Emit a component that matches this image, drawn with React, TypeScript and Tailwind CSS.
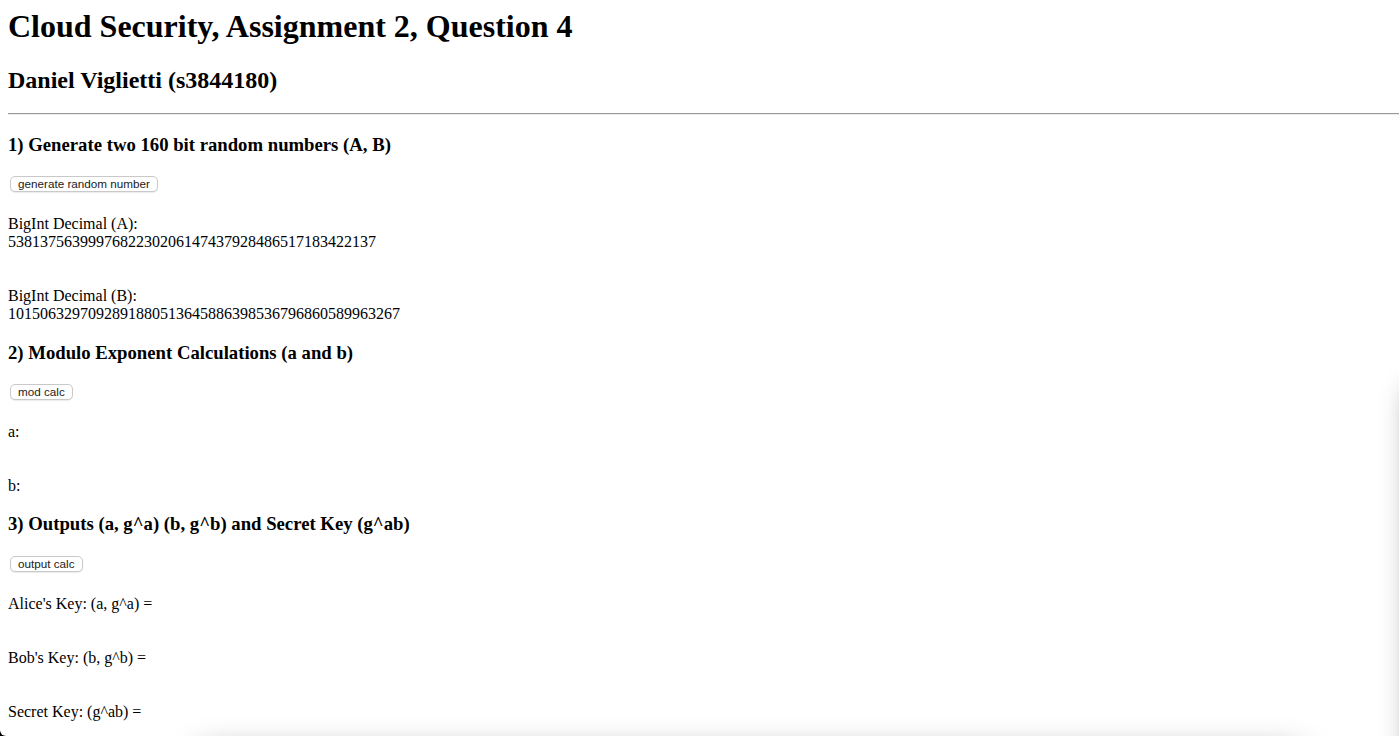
const btn =
  "ml-[2px] block rounded-[5px] border border-[#c9c9c9] bg-white px-[7px] py-0 text-[11.7px] leading-[14px] text-[#222] shadow-[0_1px_1px_rgba(0,0,0,0.08)] font-['Liberation_Sans',Arial,sans-serif]"

export default function App() {
  return (
    <div className="relative h-[736px] overflow-hidden bg-white text-black font-['Liberation_Serif','Times_New_Roman',serif]">
      <div className="flex flex-col items-start pl-2">
        <h1 className="pt-2 text-[32px] font-bold leading-[37px]">
          Cloud Security, Assignment 2, Question 4
        </h1>
        <h2 className="mt-[21px] text-[24px] font-bold leading-[28px]">
          Daniel Viglietti (s3844180)
        </h2>
        <hr className="mt-[19px] h-[2px] w-full border-t border-b-0 border-[#9a9a9a] bg-[#ececec]" />

        {/* Section 1 */}
        <h3 className="mt-[19px] text-[18.72px] font-bold leading-[21px]">
          1) Generate two 160 bit random numbers (A, B)
        </h3>
        <button className={`mt-[21px] ${btn}`}>generate random number</button>
        <p className="mt-[23px] text-[16px] leading-[18px]">
          BigInt Decimal (A):
          <br />
          5381375639997682230206147437928486517183422137
        </p>
        <p className="mt-[36px] text-[16px] leading-[18px]">
          BigInt Decimal (B):
          <br />
          1015063297092891880513645886398536796860589963267
        </p>

        {/* Section 2 */}
        <h3 className="mt-[19px] text-[18.72px] font-bold leading-[21px]">
          2) Modulo Exponent Calculations (a and b)
        </h3>
        <button className={`mt-[21px] ${btn}`}>mod calc</button>
        <p className="mt-[23px] text-[16px] leading-[18px]">a:</p>
        <p className="mt-[36px] text-[16px] leading-[18px]">b:</p>

        {/* Section 3 */}
        <h3 className="mt-[18px] text-[18.72px] font-bold leading-[21px]">
          3) Outputs (a, g^a) (b, g^b) and Secret Key (g^ab)
        </h3>
        <button className={`mt-[22px] ${btn}`}>output calc</button>
        <p className="mt-[23px] text-[16px] leading-[18px]">Alice's Key: (a, g^a) =</p>
        <p className="mt-[36px] text-[16px] leading-[18px]">Bob's Key: (b, g^b) =</p>
        <p className="mt-[36px] text-[16px] leading-[18px]">Secret Key: (g^ab) =</p>
      </div>

      {/* shadows of a neighbouring window */}
      <div className="pointer-events-none absolute left-[1410px] top-[390px] h-[420px] w-[40px] bg-black/45 blur-[14px]" />
      <div className="pointer-events-none absolute left-[200px] top-[752px] h-[40px] w-[1100px] bg-black/40 blur-[16px]" />
      {/* window corner */}
      <div className="absolute bottom-0 left-0 h-[12px] w-[6px] bg-black">
        <div className="h-full w-full rounded-bl-[12px] bg-white" />
      </div>
    </div>
  )
}
